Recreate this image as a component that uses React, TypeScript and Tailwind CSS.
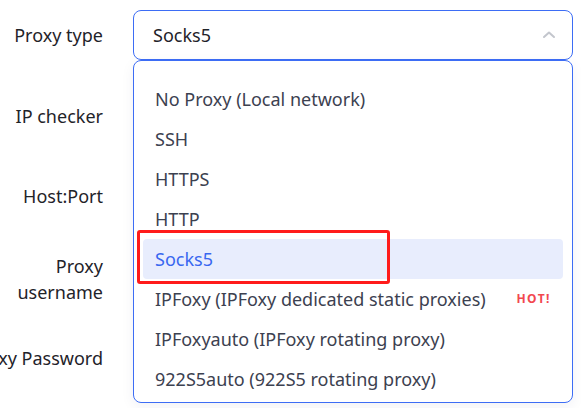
const options = [
  "No Proxy (Local network)",
  "SSH",
  "HTTPS",
  "HTTP",
  "Socks5",
  "IPFoxy (IPFoxy dedicated static proxies)",
  "IPFoxyauto (IPFoxy rotating proxy)",
  "922S5auto (922S5 rotating proxy)",
];

const FieldLabel = ({ children }: { children: React.ReactNode }) => (
  <div className="w-[103px] shrink-0 flex justify-end text-right whitespace-nowrap text-[18px] leading-[26px] text-[#1f2329]">
    {children}
  </div>
);

export default function App() {
  const selected = "Socks5";
  return (
    <div
      className="relative w-[581px] h-[408px] overflow-hidden bg-white"
      style={{ fontFamily: '"Noto Sans", "Open Sans", sans-serif' }}
    >
      <div className="flex flex-col pt-[10px]">
        <div className="flex items-center gap-[30px] h-[50px]">
          <FieldLabel>Proxy type</FieldLabel>
          <div className="relative w-[440px] h-[50px] rounded-[8px] border border-[#3d6df5] flex items-center px-[19px] text-[18px] text-[#1f2329]">
            {selected}
            <svg
              className="absolute right-[16px] top-1/2 -translate-y-1/2"
              width="14"
              height="10"
              viewBox="0 0 14 10"
              fill="none"
            >
              <polyline points="2,7 7,2.5 12,7" stroke="#c3c6cd" strokeWidth="2" strokeLinecap="round" strokeLinejoin="round" />
            </svg>
          </div>
        </div>
        <div className="flex items-center gap-[30px] h-[50px] mt-[31px]">
          <FieldLabel>IP checker</FieldLabel>
        </div>
        <div className="flex items-center gap-[30px] h-[50px] mt-[30px]">
          <FieldLabel>Host:Port</FieldLabel>
        </div>
        <div className="flex items-center gap-[30px] h-[52px] mt-[32px]">
          <FieldLabel>
            <span>
              Proxy
              <br />
              username
            </span>
          </FieldLabel>
        </div>
        <div className="flex items-center gap-[30px] h-[50px] mt-[28px]">
          <FieldLabel>Proxy Password</FieldLabel>
        </div>
      </div>

      <div className="absolute left-[133px] top-[60px] w-[440px] h-[343px] rounded-[8px] border border-[#3d6df5] bg-white shadow-[0_4px_14px_rgba(30,40,80,0.06)] pt-[18px] px-[9px]">
        {options.map((o) => (
          <div
            key={o}
            className={
              o === selected
                ? "relative h-[40px] flex items-center px-[12px] rounded-[4px] bg-[#e8edfd] text-[18px] text-[#3867f0]"
                : "relative h-[40px] flex items-center px-[12px] text-[18px] text-[#3c4150]"
            }
          >
            <span className="whitespace-nowrap">{o}</span>
            {o.startsWith("IPFoxy (") && (
              <span className="ml-auto text-[12px] font-bold tracking-[1.5px] text-[#f2484f]">HOT!</span>
            )}
            {o === selected && (
              <div className="absolute left-[-6px] top-[-9px] w-[253px] h-[54px] rounded-[3px] border-[3px] border-[#ff1b1b]" />
            )}
          </div>
        ))}
      </div>
    </div>
  );
}
